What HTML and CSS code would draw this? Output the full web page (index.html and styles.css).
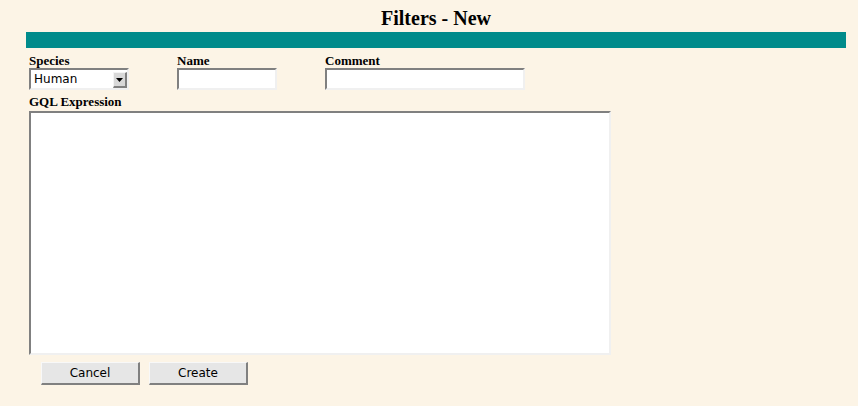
FILE: index.html
```html
<!DOCTYPE html>
<html>
<head>
<meta charset="utf-8">
<title>Filters - New</title>
<link rel="stylesheet" href="styles.css">
</head>
<body>
<div class="page">
  <h1 class="title">Filters - New</h1>
  <div class="bar"></div>
  <form class="form">
    <div class="fields">
      <div class="field">
        <label class="label">Species</label>
        <span class="select-wrap">
          <select class="select"><option>Human</option></select>
          <span class="arrow"><svg width="7" height="4" viewBox="0 0 7 4"><path d="M0 0H7L3.5 4Z" fill="#000"/></svg></span>
        </span>
      </div>
      <div class="field">
        <label class="label">Name</label>
        <input class="input input-name" type="text">
      </div>
      <div class="field">
        <label class="label">Comment</label>
        <input class="input input-comment" type="text">
      </div>
    </div>
    <div class="field gql">
      <label class="label">GQL Expression</label>
      <textarea class="textarea"></textarea>
    </div>
    <div class="buttons">
      <button type="button" class="btn">Cancel</button>
      <button type="button" class="btn">Create</button>
    </div>
  </form>
</div>
</body>
</html>
```
FILE: styles.css
```css
html, body {
  margin: 0;
  padding: 0;
  background: #fcf4e6;
}
.page {
  padding: 6px 12px 0 26px;
  width: 820px;
}
.title {
  margin: 0 0 2px 0;
  font-family: "Liberation Serif", serif;
  font-weight: bold;
  font-size: 20px;
  line-height: 24px;
  text-align: center;
  color: #000;
}
.bar {
  height: 16px;
  background: #008b8b;
}
.form {
  margin: 5px 0 0 3px;
}
.fields {
  display: grid;
  grid-template-columns: 148px 148px auto;
}
.field {
  display: flex;
  flex-direction: column;
  align-items: flex-start;
}
.label {
  font-family: "Liberation Serif", serif;
  font-weight: bold;
  font-size: 13px;
  line-height: 15px;
  color: #000;
}
.select-wrap {
  position: relative;
  display: block;
  width: 100px;
  height: 22px;
}
.select {
  appearance: none;
  -webkit-appearance: none;
  box-sizing: border-box;
  width: 100px;
  height: 22px;
  margin: 0;
  padding: 0 0 0 3px;
  border-style: solid;
  border-width: 2px;
  border-color: #808080 #f0f0f0 #f0f0f0 #808080;
  border-radius: 0;
  background: #fff;
  font-family: "DejaVu Sans", sans-serif;
  font-size: 12px;
  color: #000;
  outline: none;
}
.arrow {
  position: absolute;
  top: 4px;
  left: 84px;
  width: 14px;
  height: 16px;
  box-sizing: border-box;
  background: #d8d8d8;
  border-style: solid;
  border-width: 1px 2px 2px 1px;
  border-color: #f4f4f4 #808080 #808080 #f4f4f4;
  display: flex;
  align-items: center;
  justify-content: center;
}
.input {
  box-sizing: border-box;
  height: 22px;
  margin: 0;
  padding: 0 3px;
  border-style: solid;
  border-width: 2px;
  border-color: #808080 #f0f0f0 #f0f0f0 #808080;
  background: #fff;
  font-family: "DejaVu Sans", sans-serif;
  font-size: 12px;
  outline: none;
}
.input-name {
  width: 100px;
}
.input-comment {
  width: 200px;
}
.gql {
  margin-top: 4px;
}
.textarea {
  box-sizing: border-box;
  width: 582px;
  height: 244px;
  margin: 2px 0 0 0;
  padding: 2px;
  border-style: solid;
  border-width: 2px;
  border-color: #808080 #f0f0f0 #f0f0f0 #808080;
  background: #fff;
  resize: none;
  outline: none;
  font-family: "DejaVu Sans Mono", monospace;
  font-size: 12px;
}
.buttons {
  display: flex;
  gap: 9px;
  margin: 7px 0 0 12px;
}
.btn {
  box-sizing: border-box;
  width: 99px;
  height: 23px;
  margin: 0;
  padding: 0;
  border-style: solid;
  border-width: 1px 2px 2px 1px;
  border-color: #f8f8f8 #808080 #808080 #f8f8f8;
  border-radius: 0;
  background: #e6e6e6;
  font-family: "DejaVu Sans", sans-serif;
  font-size: 12px;
  color: #000;
}
```
